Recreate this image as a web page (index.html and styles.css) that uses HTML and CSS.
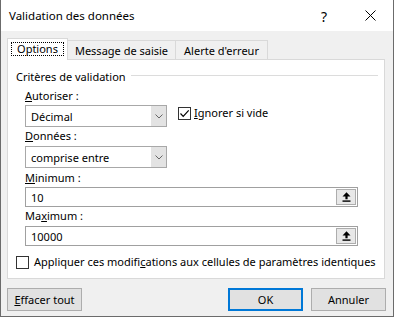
FILE: index.html
```html
<!DOCTYPE html>
<html lang="fr">
<head>
<meta charset="utf-8">
<title>Validation des données</title>
<link rel="stylesheet" href="styles.css">
</head>
<body>
<div class="window">
  <div class="titlebar">
    <span class="title">Validation des données</span>
    <span class="tb-btn help">?</span>
    <span class="tb-btn close">
      <svg width="11" height="11" viewBox="0 0 11 11"><path d="M0.5 0.5 L10.5 10.5 M10.5 0.5 L0.5 10.5" stroke="#000" stroke-width="1" fill="none"/></svg>
    </span>
  </div>
  <div class="body">
    <div class="tabs">
      <div class="tab sel"><span class="focus">Options</span></div>
      <div class="tab t2">Message de saisie</div>
      <div class="tab t3">Alerte d'erreur</div>
    </div>
    <div class="panel">
      <div class="group-head"><span>Critères de validation</span><span class="line"></span></div>
      <div class="fields">
        <div class="lbl l1"><u>A</u>utoriser :</div>
        <div class="row1">
          <div class="combo">
            <span class="val">Décimal</span>
            <span class="drop"><svg width="8" height="5" viewBox="0 0 8 5"><path d="M0.5 0.5 L4 4 L7.5 0.5" stroke="#666" stroke-width="1" fill="none"/></svg></span>
          </div>
          <div class="check c1">
            <span class="box"><svg width="11" height="11" viewBox="0 0 11 11"><path d="M1.5 5.5 L4.2 8.3 L9.7 2.3" stroke="#000" stroke-width="1.2" fill="none"/></svg></span>
            <span><u>I</u>gnorer si vide</span>
          </div>
        </div>
        <div class="lbl l2"><u>D</u>onnées :</div>
        <div class="combo">
          <span class="val">comprise entre</span>
          <span class="drop"><svg width="8" height="5" viewBox="0 0 8 5"><path d="M0.5 0.5 L4 4 L7.5 0.5" stroke="#666" stroke-width="1" fill="none"/></svg></span>
        </div>
        <div class="lbl l3"><u>M</u>inimum :</div>
        <div class="input">
          <span class="val">10</span>
          <span class="ref"><svg width="9" height="10" viewBox="0 0 9 10"><path d="M4.5 0.3 L8.5 4.5 L5.6 4.5 L5.6 7.2 L3.4 7.2 L3.4 4.5 L0.5 4.5 Z" fill="#000"/><rect x="0.5" y="8.4" width="8" height="1.4" fill="#000"/></svg></span>
        </div>
        <div class="lbl l4">Ma<u>x</u>imum :</div>
        <div class="input">
          <span class="val">10000</span>
          <span class="ref"><svg width="9" height="10" viewBox="0 0 9 10"><path d="M4.5 0.3 L8.5 4.5 L5.6 4.5 L5.6 7.2 L3.4 7.2 L3.4 4.5 L0.5 4.5 Z" fill="#000"/><rect x="0.5" y="8.4" width="8" height="1.4" fill="#000"/></svg></span>
        </div>
      </div>
      <div class="check c2">
        <span class="box"></span>
        <span>Appliquer ces modifi<u>c</u>ations aux cellules de paramètres identiques</span>
      </div>
    </div>
    <div class="buttons">
      <div class="btn"><u>E</u>ffacer tout</div>
      <div class="spacer"></div>
      <div class="btn default">OK</div>
      <div class="btn">Annuler</div>
    </div>
  </div>
</div>
</body>
</html>
```

FILE: styles.css
```css
* { box-sizing: border-box; }

body {
  margin: 0;
  background: #ffffff;
  font-family: "Noto Sans", "Open Sans", sans-serif;
  font-size: 11px;
  color: #000;
}

u { text-underline-offset: 1px; }

.window {
  width: 394px;
  height: 317px;
  border: 1px solid #6b6b6b;
  border-top: none;
  background: #f0f0f0;
  display: flex;
  flex-direction: column;
}

.titlebar {
  height: 31px;
  background: #ffffff;
  display: flex;
  align-items: center;
  padding-left: 8px;
}

.title {
  flex: 1;
  font-size: 11.5px;
}

.tb-btn {
  width: 46px;
  height: 31px;
  display: flex;
  align-items: center;
  justify-content: center;
}

.help {
  font-size: 14px;
  padding-top: 1px;
}

.body {
  flex: 1;
  padding: 7px 0 0 6px;
}

.tabs {
  display: flex;
  align-items: flex-end;
  height: 21px;
  position: relative;
  z-index: 2;
}

.tab {
  height: 19px;
  border-top: 1px solid #d9d9d9;
  border-right: 1px solid #d9d9d9;
  background: #f0f0f0;
  display: flex;
  align-items: center;
  justify-content: center;
}

.tab.sel {
  width: 61px;
  height: 22px;
  margin-bottom: -1px;
  background: #ffffff;
  border-left: 1px solid #d9d9d9;
  padding-bottom: 1px;
}

.focus {
  border: 1px dotted #000;
  padding: 0 5px;
  line-height: 12px;
  height: 14px;
  display: flex;
  align-items: center;
}

.t2 { width: 108px; }
.t3 { width: 92px; }

.panel {
  width: 378px;
  height: 220px;
  background: #ffffff;
  border: 1px solid #d9d9d9;
  padding: 8px 6px 0 8px;
}

.group-head {
  height: 16px;
  display: flex;
  align-items: center;
  gap: 5px;
}

.group-head .line {
  flex: 1;
  height: 1px;
  background: #dcdcdc;
  margin-top: -1px;
}

.fields {
  padding-left: 9px;
}

.lbl {
  height: 16px;
  line-height: 16px;
}

.l1 { margin-top: 4px; margin-bottom: 1px; }
.l2 { margin-top: 1px; margin-bottom: 2px; }
.l3 { margin-top: 2px; margin-bottom: 1px; }
.l4 { margin-top: 1px; margin-bottom: 2px; }

.row1 {
  display: flex;
  align-items: flex-start;
}

.combo {
  width: 142px;
  height: 22px;
  border: 1px solid #a8a8a8;
  background: #ffffff;
  display: flex;
  align-items: stretch;
}

.combo .val,
.input .val {
  flex: 1;
  padding-left: 5px;
  display: flex;
  align-items: center;
}

.drop {
  width: 15px;
  background: #e3e3e3;
  display: flex;
  align-items: center;
  justify-content: center;
}

.check {
  display: flex;
  align-items: center;
  line-height: 14px;
}

.check .box {
  width: 13px;
  height: 13px;
  border: 1px solid #333333;
  background: #ffffff;
  display: flex;
  align-items: center;
  justify-content: center;
}

.c1 {
  margin-left: 11px;
  margin-top: 1px;
  gap: 3px;
}

.c2 {
  margin-top: 9px;
  gap: 5px;
}

.input {
  width: 333px;
  height: 20px;
  border: 1px solid #a0a0a0;
  background: #ffffff;
  display: flex;
  align-items: center;
  padding-right: 1px;
}

.ref {
  width: 20px;
  height: 16px;
  border: 1px solid #adadad;
  background: #e8e8e8;
  display: flex;
  align-items: center;
  justify-content: center;
}

.buttons {
  display: flex;
  margin-top: 9px;
  gap: 8px;
  width: 379px;
}

.spacer { flex: 1; }

.btn {
  width: 75px;
  height: 23px;
  border: 1px solid #adadad;
  background: #e1e1e1;
  display: flex;
  align-items: center;
  justify-content: center;
}

.btn.default {
  border: 2px solid #0078d7;
}
```
